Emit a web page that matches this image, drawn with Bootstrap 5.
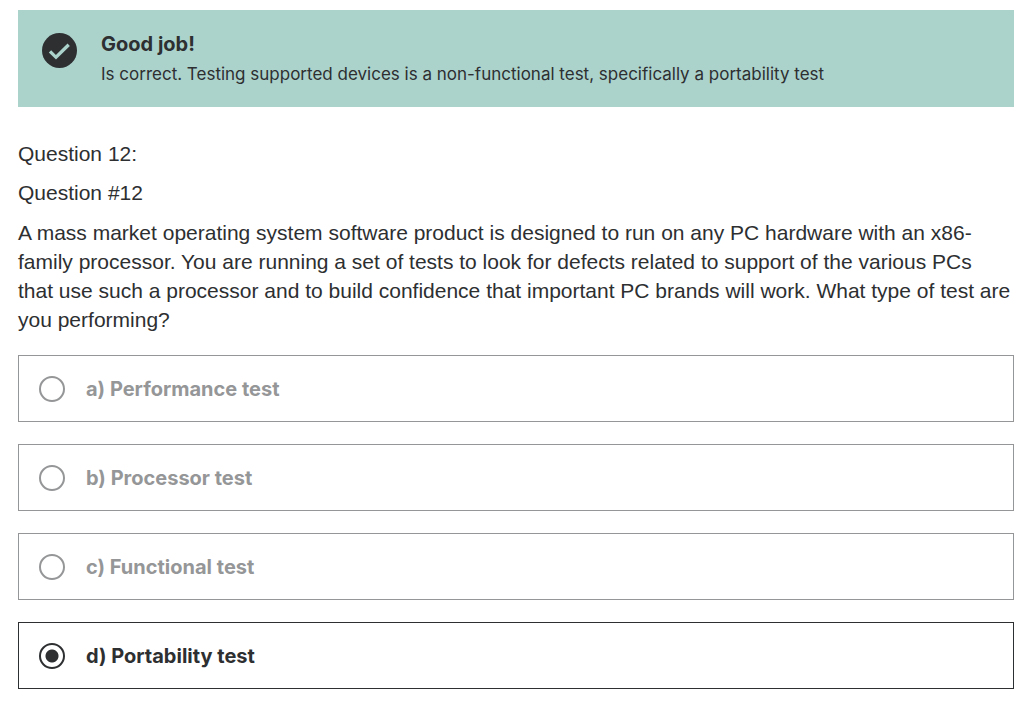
<!DOCTYPE html>
<html lang="en">
<head>
<meta charset="utf-8">
<meta name="viewport" content="width=device-width, initial-scale=1">
<title>Question 12</title>
<link href="https://cdn.jsdelivr.net/npm/bootstrap@5.3.0/dist/css/bootstrap.min.css" rel="stylesheet">
<style>
body{font-family:Inter,"Liberation Sans",sans-serif;color:#2d2f31;background:#fff;padding:10px 17px 20px 18px}
.feedback{background:#acd2cc;color:#2d2f31;border:0;border-radius:0;padding:20px 24px 19px;gap:24px;margin-bottom:32px}
.feedback svg{width:35px;height:35px;margin-top:3px;flex:none}
.feedback h1{font-size:20px;line-height:28px;font-weight:700;margin:0}
.feedback p{font-size:17px;line-height:28px;margin:2px 0 0}
.question{font-family:"Liberation Sans",Arial,sans-serif}
.question p{font-size:21px;line-height:29px;margin:0 0 10px}
.question .prompt{margin:11px 0 21px}
.answers{gap:22px}
.answer{border:1px solid #959697;padding:0 20px;gap:21px;min-height:67px;color:#959697;font-size:20px;font-weight:700}
.answer.chosen{border-color:#2d2f31;color:#2d2f31}
.answer .form-check-input,.answer .form-check-input:checked{width:26px;height:26px;margin:0;border:2px solid #959697;background:#fff;box-shadow:none;flex:none;opacity:1}
.answer .form-check-input:checked{border-color:#2d2f31;background:radial-gradient(circle,#2d2f31 6px,#fff 7px)}
</style>
</head>
<body>
<main>
<div class="alert feedback d-flex align-items-start" role="alert">
<svg viewBox="0 0 35 35" aria-hidden="true"><circle cx="17.5" cy="17.5" r="17.5" fill="#2d2f31"/><path d="M8 18.300l6 6L26.700 11.800" fill="none" stroke="#acd2cc" stroke-width="3.300"/></svg>
<div><h1>Good job!</h1><p>Is correct. Testing supported devices is a non-functional test, specifically a portability test</p></div>
</div>
<form>
<div class="question"><p>Question 12:</p><p>Question #12</p>
<p class="prompt">A mass market operating system software product is designed to run on any PC hardware with an x86-family processor. You are running a set of tests to look for defects related to support of the various PCs that&nbsp;use such a processor and to build confidence that important PC brands will work. What type of test are you&nbsp;performing?</p></div>
<div class="answers d-flex flex-column">
<label class="answer d-flex align-items-center" for="a"><input class="form-check-input" type="radio" name="answer" id="a"><span>a) Performance test</span></label>
<label class="answer d-flex align-items-center" for="b"><input class="form-check-input" type="radio" name="answer" id="b"><span>b) Processor test</span></label>
<label class="answer d-flex align-items-center" for="c"><input class="form-check-input" type="radio" name="answer" id="c"><span>c) Functional test</span></label>
<label class="answer chosen d-flex align-items-center" for="d"><input class="form-check-input" type="radio" name="answer" id="d" checked><span>d) Portability test</span></label>
</div>
</form>
</main>
<script src="https://cdn.jsdelivr.net/npm/bootstrap@5.3.0/dist/js/bootstrap.bundle.min.js"></script>
</body>
</html>
